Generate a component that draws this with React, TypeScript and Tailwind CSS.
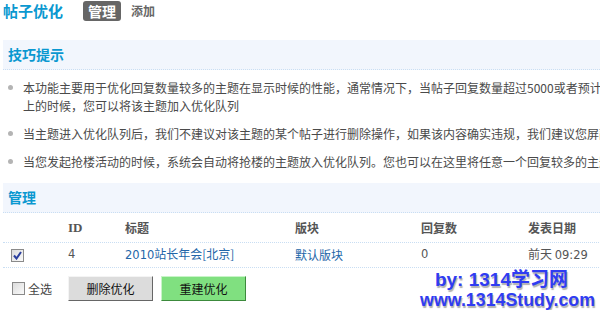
import React from "react";

const cjk = "font-['Noto_Sans_CJK_SC','Noto_Sans',sans-serif]";

const tips: string[][] = [
  [
    "本功能主要用于优化回复数量较多的主题在显示时候的性能，通常情况下，当帖子回复数量超过5000或者预计回复数量超过5000以",
    "上的时候，您可以将该主题加入优化队列",
  ],
  ["当主题进入优化队列后，我们不建议对该主题的某个帖子进行删除操作，如果该内容确实违规，我们建议您屏蔽该帖子"],
  ["当您发起抢楼活动的时候，系统会自动将抢楼的主题放入优化队列。您也可以在这里将任意一个回复较多的主题加入优化队列"],
];

const Box: React.FC<{ checked?: boolean }> = ({ checked }) => (
  <span className="w-[13px] h-[13px] border border-[#8a8a8a] bg-gradient-to-br from-[#dcdcdc] to-[#fafafa] flex items-center justify-center">
    {checked && (
      <svg width="9" height="9" viewBox="0 0 9 9">
        <path d="M1 4.5 L3.5 7.5 L8 1" fill="none" stroke="#2b3f9e" strokeWidth="2" />
      </svg>
    )}
  </span>
);

const cols = "grid grid-cols-[65px_57px_170px_126px_107px_1fr] items-center";

export default function App() {
  return (
    <div className={`w-[600px] h-[310px] overflow-hidden bg-white relative ${cjk}`}>
      <div className="w-[780px] pl-[3px]">
        {/* 标题栏 */}
        <div className="h-[40px] flex items-start pt-[1px]">
          <h1 className="text-[15px] leading-[20px] font-bold text-[#0a98d0]">帖子优化</h1>
          <span className="ml-[20px] h-[20px] px-[5px] rounded-[3px] bg-[#666] text-white text-[14px] leading-[20px] font-bold">
            管理
          </span>
          <span className="ml-[10px] text-[12px] leading-[20px] font-bold text-[#666]">添加</span>
        </div>

        {/* 技巧提示 */}
        <div className="h-[30px] bg-[#f2f6fd] border-b border-dotted border-[#c9def3] flex items-center pl-[5px]">
          <h3 className="text-[14px] font-bold text-[#0a98d0]">技巧提示</h3>
        </div>
        <ul className="pt-[4px] text-[12px] leading-[18px] text-[#4a4a4a]">
          {tips.map((lines, i) => (
            <li key={i} className="py-[5px] flex">
              <span className="w-[20px] shrink-0 flex justify-start pl-[5px] pt-[6px]">
                <span className="w-[5px] h-[5px] rounded-full bg-[#b4b4b4]" />
              </span>
              <div>
                {lines.map((l, j) => (
                  <div key={j} className="whitespace-nowrap">
                    {l}
                  </div>
                ))}
              </div>
            </li>
          ))}
        </ul>

        {/* 管理 */}
        <div className="mt-[7px] h-[30px] bg-[#f2f6fd] border-b border-dotted border-[#c9def3] flex items-center pl-[5px]">
          <h3 className="text-[14px] font-bold text-[#0a98d0]">管理</h3>
        </div>
        <div className="text-[12px] w-[600px]">
          <div className={`${cols} h-[30px] border-b border-dotted border-[#c9def3] font-bold text-[#555]`}>
            <span />
            <span className="font-['Liberation_Serif',serif] text-[13px]">ID</span>
            <span>标题</span>
            <span>版块</span>
            <span>回复数</span>
            <span>发表日期</span>
          </div>
          <div className={`${cols} h-[25px] border-b border-dotted border-[#c9def3] text-[#555]`}>
            <span className="pl-[8px]">
              <Box checked />
            </span>
            <span className="font-['DejaVu_Sans',sans-serif] text-[11.5px]">4</span>
            <span className="text-[#2366a8] whitespace-nowrap">
              <span className="font-['DejaVu_Sans',sans-serif] text-[11.5px]">2010</span>站长年会[北京]
            </span>
            <span className="text-[#2366a8]">默认版块</span>
            <span className="font-['DejaVu_Sans',sans-serif] text-[11.5px]">0</span>
            <span className="whitespace-nowrap">
              前天 <span className="font-['DejaVu_Sans',sans-serif] text-[11.5px]">09:29</span>
            </span>
          </div>
          <div className="flex items-center pt-[8px]">
            <label className="pl-[9px] flex items-center gap-[3px] text-[#444] w-[65px]">
              <Box />
              <span>全选</span>
            </label>
            <button className="w-[85px] h-[25px] bg-[#dcdcdc] border border-[#f4f4f4] border-r-[#666] border-b-[#666] text-[#111]">
              删除优化
            </button>
            <button className="ml-[8px] w-[85px] h-[25px] bg-[#80e080] border border-[#c8f4c8] border-r-[#3c8a3c] border-b-[#3c8a3c] text-[#111]">
              重建优化
            </button>
          </div>
        </div>
      </div>

      {/* 水印 */}
      <div className="absolute right-[5px] bottom-0 text-right font-['Liberation_Sans',sans-serif] font-bold text-[#2f3cf2] leading-[20px] [text-shadow:1px_2px_1px_#b0b0b0]">
        <div className="text-[19px] pr-[27px]">
          by: 1314<span className={cjk}>学习网</span>
        </div>
        <div className="text-[17.8px]">www.1314Study.com</div>
      </div>
    </div>
  );
}
